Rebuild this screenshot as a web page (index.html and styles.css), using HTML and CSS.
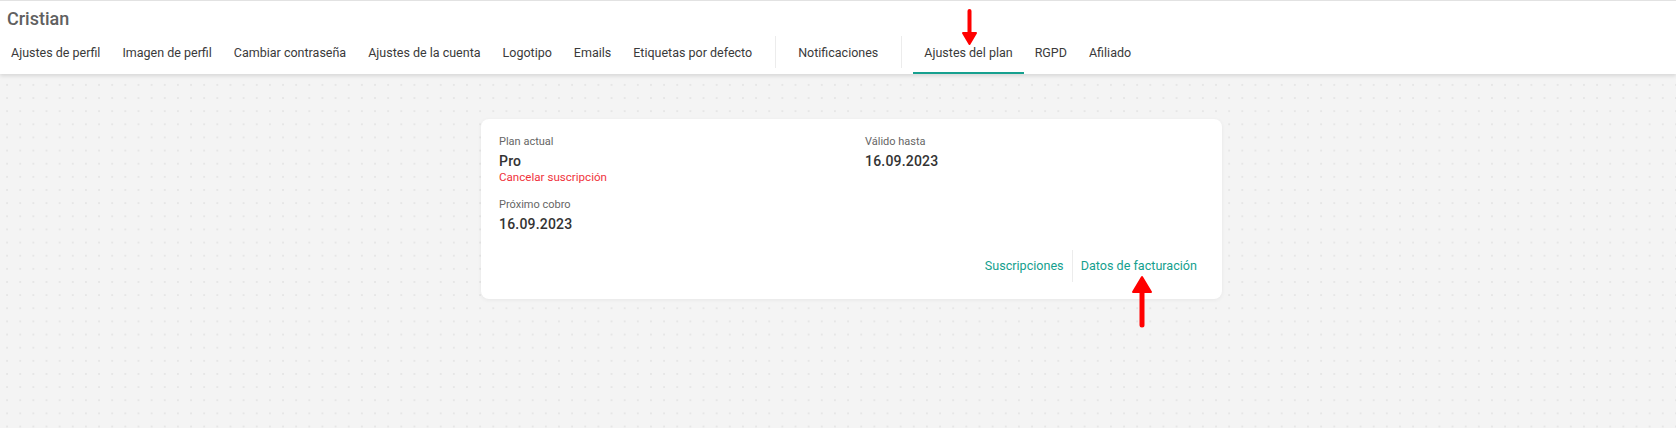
FILE: index.html
```html
<!DOCTYPE html>
<html lang="es">

<head>
    <meta charset="UTF-8">
    <title>Ajustes del plan</title>
    <link rel="stylesheet" href="styles.css">
</head>

<body>
    <header class="topbar">
        <div class="user-name">Cristian</div>
        <nav class="tabs">
            <a class="tab">Ajustes de perfil</a>
            <a class="tab">Imagen de perfil</a>
            <a class="tab">Cambiar contraseña</a>
            <a class="tab">Ajustes de la cuenta</a>
            <a class="tab">Logotipo</a>
            <a class="tab">Emails</a>
            <a class="tab">Etiquetas por defecto</a>
            <span class="tab-sep"></span>
            <a class="tab">Notificaciones</a>
            <span class="tab-sep"></span>
            <a class="tab active">Ajustes del plan
                <svg class="arrow-down" width="17" height="37" viewBox="0 0 17 37">
                    <line x1="8.5" y1="2" x2="8.5" y2="25" stroke="#f00" stroke-width="4" stroke-linecap="round" />
                    <polygon points="2,24 15,24 8.5,35" fill="#f00" stroke="#f00" stroke-width="2" stroke-linejoin="round" />
                </svg>
            </a>
            <a class="tab">RGPD</a>
            <a class="tab">Afiliado</a>
        </nav>
    </header>

    <main class="content">
        <div class="plan-card">
            <div class="plan-grid">
                <div class="field">
                    <div class="label">Plan actual</div>
                    <div class="value">Pro</div>
                    <a class="cancel">Cancelar suscripción</a>
                </div>
                <div class="field">
                    <div class="label">Válido hasta</div>
                    <div class="value">16.09.2023</div>
                </div>
                <div class="field next">
                    <div class="label">Próximo cobro</div>
                    <div class="value">16.09.2023</div>
                </div>
            </div>
            <div class="card-links">
                <a class="card-link">Suscripciones</a>
                <span class="link-sep"></span>
                <a class="card-link billing">Datos de facturación
                    <svg class="arrow-up" width="22" height="54" viewBox="0 0 22 54">
                        <polygon points="2,17 20,17 11,2" fill="#f00" stroke="#f00" stroke-width="2" stroke-linejoin="round" />
                        <line x1="11" y1="15" x2="11" y2="50" stroke="#f00" stroke-width="5" stroke-linecap="round" />
                    </svg>
                </a>
            </div>
        </div>
    </main>
</body>

</html>
```

FILE: styles.css
```css
body {
    margin: 0;
    font-family: Roboto, "Liberation Sans", Arial, sans-serif;
    color: #333;
    background-color: #f4f4f4;
    background-image: radial-gradient(circle, #e6e6e6 1px, transparent 1.3px);
    background-size: 13.15px 13.15px;
    background-position: 0.5px 12.6px;
    min-height: 428px;
}

a {
    cursor: pointer;
}

.topbar {
    background-color: #fff;
    box-shadow: inset 0 1px 0 #e2e2e2, 0 2px 4px rgba(0, 0, 0, 0.12);
}

.user-name {
    padding: 7px 7px 0;
    font-size: 18px;
    line-height: 24px;
    font-weight: 500;
    color: #606060;
}

.tabs {
    display: flex;
    align-items: flex-start;
    margin-top: 5px;
}

.tab {
    position: relative;
    padding: 9px 11px 12px;
    font-size: 12.5px;
    line-height: 15px;
    color: #3a3a3a;
    white-space: nowrap;
    border-bottom: 2px solid transparent;
}

.tab.active {
    border-bottom-color: #16a08f;
}

.tab-sep {
    width: 1px;
    height: 32px;
    margin: 0 11px 0 12px;
    background-color: #ececec;
}

.arrow-down {
    position: absolute;
    left: 48px;
    top: -27px;
}

.content {
    display: flex;
    justify-content: center;
    padding: 45px 0 0 27px;
}

.plan-card {
    width: 741px;
    box-sizing: border-box;
    padding: 16px 17px 17px 18px;
    background-color: #fff;
    border-radius: 8px;
    box-shadow: 0 1px 4px rgba(0, 0, 0, 0.06);
}

.plan-grid {
    display: grid;
    grid-template-columns: 1fr 1fr;
    column-gap: 26px;
}

.field.next {
    margin-top: 13px;
}

.label {
    font-size: 11px;
    line-height: 14px;
    color: #666;
}

.value {
    margin-top: 3px;
    font-size: 14px;
    line-height: 18px;
    font-weight: 500;
    color: #333;
    letter-spacing: 0.2px;
}

.cancel {
    display: block;
    font-size: 11.6px;
    line-height: 15px;
    color: #f0323c;
}

.card-links {
    display: flex;
    justify-content: flex-end;
    margin-top: 17px;
}

.card-link {
    position: relative;
    padding: 0 8px;
    font-size: 12.6px;
    line-height: 32px;
    color: #14a08e;
}

.link-sep {
    width: 1px;
    background-color: #ececec;
}

.arrow-up {
    position: absolute;
    left: 58px;
    top: 25px;
}
```
